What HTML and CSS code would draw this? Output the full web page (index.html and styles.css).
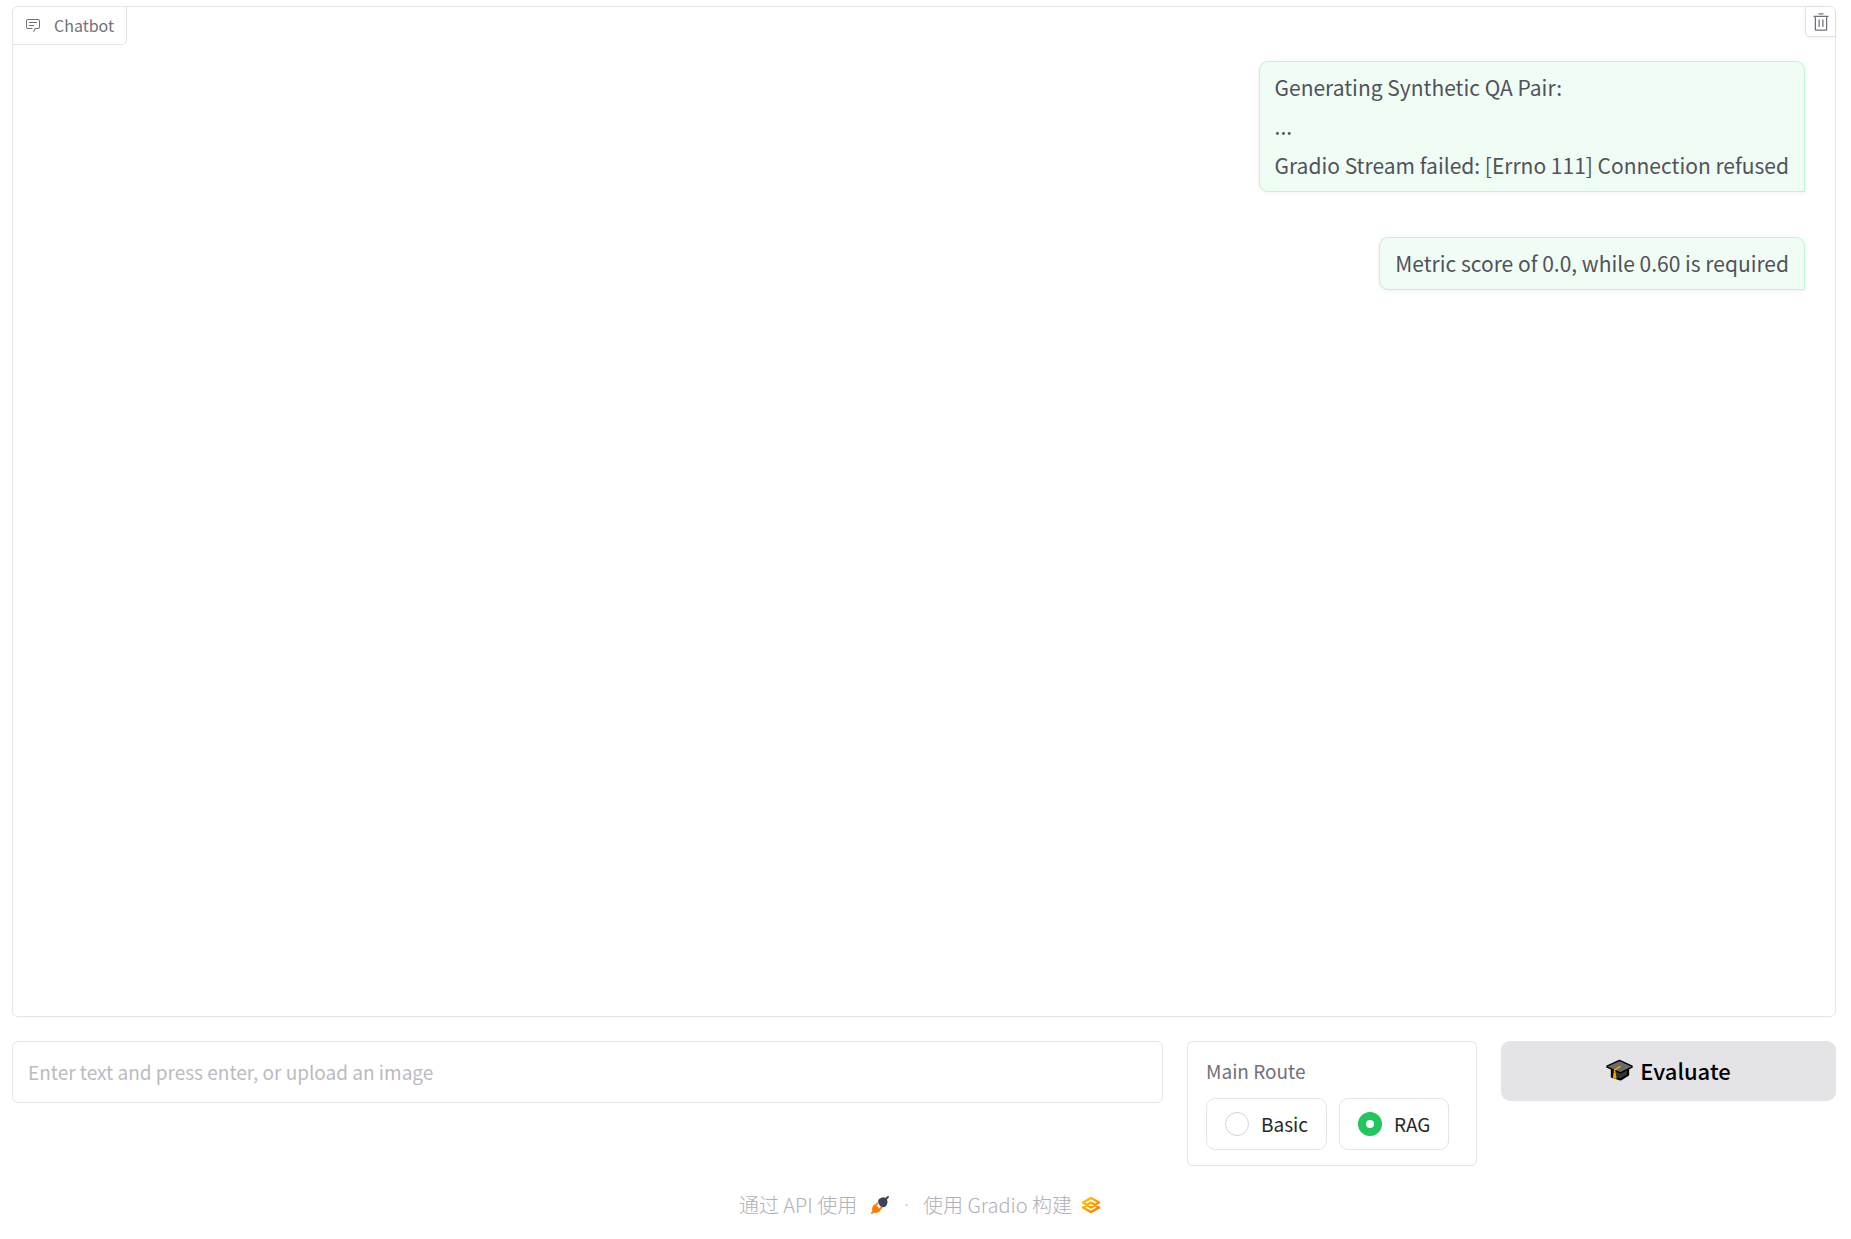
FILE: index.html
```html
<!DOCTYPE html>
<html lang="zh-CN">
  <head>
    <meta charset="UTF-8">
    <meta name="viewport" content="width=device-width, initial-scale=1">
    <title>Gradio</title>
    <link rel="stylesheet" href="styles.css">
  </head>
  <body>
    <main class="app">
      <section class="chatbot">
        <div class="chat_head">
          <h2 class="chat_label">
            <svg width="16" height="16" viewBox="0 0 32 32" fill="currentColor" aria-hidden="true">
              <path d="M17.74 30L16 29l4-7h6a2 2 0 0 0 2-2V8a2 2 0 0 0-2-2H6a2 2 0 0 0-2 2v12a2 2 0 0 0 2 2h9v2H6a4 4 0 0 1-4-4V8a4 4 0 0 1 4-4h20a4 4 0 0 1 4 4v12a4 4 0 0 1-4 4h-4.84Z"/>
              <path d="M8 10h16v2H8zM8 16h10v2H8z"/>
            </svg>
            Chatbot
          </h2>
          <button class="clear" type="button" aria-label="Clear">
            <svg width="20" height="20" viewBox="0 0 32 32" fill="currentColor" aria-hidden="true">
              <path d="M12 12h2v12h-2zM18 12h2v12h-2z"/>
              <path d="M4 6v2h2v20a2 2 0 0 0 2 2h16a2 2 0 0 0 2-2V8h2V6zm4 22V8h16v20zM12 2h8v2h-8z"/>
            </svg>
          </button>
        </div>
        <div class="messages">
          <div class="message">
            <p>Generating Synthetic QA Pair:</p>
            <p>...</p>
            <p>Gradio Stream failed: [Errno 111] Connection refused</p>
          </div>
          <div class="message">
            <p>Metric score of 0.0, while 0.60 is required</p>
          </div>
        </div>
      </section>

      <form class="controls">
        <input class="textbox" type="text" aria-label="Message" placeholder="Enter text and press enter, or upload an image">
        <fieldset class="route">
          <legend>Main Route</legend>
          <div class="options">
            <label><input type="radio" name="route" value="Basic">Basic</label>
            <label><input type="radio" name="route" value="RAG" checked>RAG</label>
          </div>
        </fieldset>
        <button class="evaluate" type="button">
          <svg width="27" height="22" viewBox="0 0 28 22" aria-hidden="true">
            <path d="M6 9v9l9 3 8-5V9z" fill="#333" stroke="#000" stroke-width="2" stroke-linejoin="round"/>
            <path d="M14 1L27 7v1l-12 6L1 8V7z" fill="#6b6b6b" stroke="#000" stroke-width="1.5" stroke-linejoin="round"/>
            <path d="M15 7l-6 4v5" fill="none" stroke="#f5a300" stroke-width="1.5"/>
            <path d="M8 14h2l1 6H7z" fill="#f5a300"/>
          </svg>
          Evaluate
        </button>
      </form>
    </main>

    <footer>
      <a href="#api">通过 API 使用
        <svg class="plug" width="20" height="20" viewBox="0 0 20 20" aria-hidden="true">
          <path d="M16 4l2-2" stroke="#3d4658" stroke-width="2" stroke-linecap="round"/>
          <path d="M9 4q4-3 7-1 3 4 0 8-2 2-4 1l-2-1-2-4q0-2 1-3z" fill="#3d4658"/>
          <path d="M3 17l-1 1" stroke="#ff7c00" stroke-width="2" stroke-linecap="round"/>
          <path d="M5 9l6 6q-2 3-5 3-3 0-4-3 0-4 3-6z" fill="#ff7c00"/>
          <path d="M6 10l2-2M10 14l2-2" stroke="#ff7c00" stroke-width="2"/>
        </svg>
      </a>
      <span class="dot">·</span>
      <a href="#gradio">使用 Gradio 构建
        <svg width="20" height="18" viewBox="0 0 20 18" aria-hidden="true">
          <defs>
            <linearGradient id="logo" x1="0" y1="0" x2="1" y2="1">
              <stop offset="0" stop-color="#ffc800"/>
              <stop offset="1" stop-color="#ff7a00"/>
            </linearGradient>
          </defs>
          <path d="M10 2l8 4.5-8 5-8-5zM10 6.5l8 5-8 4.5-8-4.5z" fill="none" stroke="url(#logo)" stroke-width="2.5" stroke-linejoin="round"/>
        </svg>
      </a>
    </footer>
  </body>
</html>
```
FILE: styles.css
```css
* { box-sizing: border-box; }
body { margin: 0; font-family: "Noto Sans CJK SC", sans-serif; font-size: 19px; color: #27272a; background: #fff; }
p, h2 { margin: 0; }
button, input { font-family: inherit; }

.app { padding: 6px 15px 0 12px; }

.chatbot { min-height: calc(100vh - 228px); border: 1px solid #e4e4e7; border-radius: 6px; }
.chat_head { display: flex; justify-content: space-between; align-items: flex-start; }
.chat_label { display: flex; align-items: center; gap: 13px; height: 38px; padding: 0 12px 2px; border: solid #e4e4e7; border-width: 0 1px 1px 0; border-radius: 0 0 5px 0; font-size: 16px; font-weight: 400; color: #71717a; }
.clear { display: flex; align-items: center; justify-content: center; width: 30px; height: 30px; padding: 0; border: solid #e4e4e7; border-width: 0 0 1px 1px; border-radius: 0 5px 0 5px; background: #fff; color: #71717a; box-shadow: 0 1px 4px rgba(0, 0, 0, 0.06); }

.messages { display: flex; flex-direction: column; align-items: flex-end; gap: 45px; padding: 16px 30px; }
.message { padding: 6px 15px; border: 1px solid #bbf7d0; border-radius: 9px 9px 0 9px; background: #f0fdf4; color: #52525b; font-size: 21px; line-height: 39px; box-shadow: 0 1px 4px rgba(0, 0, 0, 0.06); }

.controls { display: grid; grid-template-columns: 1151fr 290fr 335fr; align-items: start; gap: 24px; margin-top: 24px; }
.textbox { width: 100%; height: 62px; padding: 0 15px 2px; border: 1px solid #e4e4e7; border-radius: 6px; font-size: 19px; }
.textbox::placeholder { color: #bbbbc2; opacity: 1; }
.route { min-width: 0; margin: 0; padding: 14px 18px 15px; border: 1px solid #e4e4e7; border-radius: 6px; }
.route legend { float: left; padding: 0; font-size: 19px; line-height: 30px; color: #71717a; }
.options { display: flex; gap: 12px; clear: both; padding-top: 12px; }
.options label { display: flex; align-items: center; gap: 12px; height: 52px; padding: 0 18px 1px; border: 1px solid #e4e4e7; border-radius: 9px; }
.options input { appearance: none; width: 24px; height: 24px; margin: 0; border: 1px solid #d4d4d8; border-radius: 50%; background: #fff; }
.options input:checked { border: 8px solid #22c55e; }
.evaluate { display: flex; align-items: center; justify-content: center; gap: 7px; height: 60px; padding: 0 0 3px; border: 0; border-radius: 9px; background: #e4e4e7; color: #000; font-size: 22px; font-weight: 500; }

footer { display: flex; align-items: center; justify-content: center; gap: 14px; margin-top: 23px; padding-right: 11px; color: #b0b0b8; font-size: 20px; font-weight: 300; line-height: 32px; }
footer a { display: flex; align-items: center; gap: 9px; color: inherit; text-decoration: none; }
.dot { font-family: "Open Sans", sans-serif; }
.plug { margin-left: 4px; }
```
